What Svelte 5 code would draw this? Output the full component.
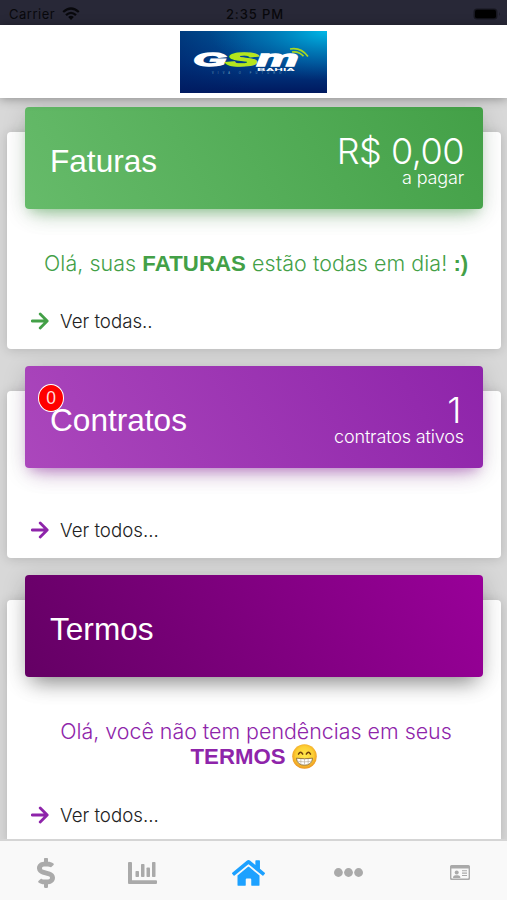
<script>
	const cards = [
		{ name: 'faturas', title: 'Faturas', value: 'R$ 0,00', label: 'a pagar', link: 'Ver todas..' },
		{ name: 'contratos', title: 'Contratos', value: '1', label: 'contratos ativos', badge: '0', link: 'Ver todos...' },
		{ name: 'termos', title: 'Termos', link: 'Ver todos...' }
	]
</script>

<div class="app">
	<div class="status">
		<div class="carrier">
			<span>Carrier</span>
			<svg class="wifi" viewBox="0 0 18 13">
				<g fill="none" stroke="#08080c" stroke-width="2.3">
					<path d="M1.2 5Q9-2 16.8 5" />
					<path d="M4 8.1Q9 3.6 14 8.1" />
				</g>
				<path d="M6.2 9.9Q9 7.6 11.8 9.9L9 12.9z" fill="#08080c" />
			</svg>
		</div>
		<span class="time">2:35 PM</span>
		<svg class="battery" viewBox="0 0 28 12">
			<rect x="0.5" y="0.5" width="24" height="11" rx="3.5" fill="#171720" />
			<rect x="2" y="1.8" width="21" height="8.4" rx="2" fill="#000" />
			<path d="M26 4q1.6 2 0 4z" fill="#171720" />
		</svg>
	</div>

	<header>
		<svg class="logo" viewBox="0 0 147 62">
			<defs>
				<linearGradient id="sky" x1="0" y1="0" x2="0" y2="1">
					<stop offset="0" stop-color="#005b9c" />
					<stop offset="0.5" stop-color="#00408a" />
					<stop offset="1" stop-color="#00195f" />
				</linearGradient>
				<radialGradient id="glow" cx="1" cy="0" r="0.8">
					<stop offset="0" stop-color="#00b9e8" />
					<stop offset="1" stop-color="#0070b0" stop-opacity="0" />
				</radialGradient>
				<linearGradient id="dark" x1="0" y1="0" x2="1" y2="0">
					<stop offset="0" stop-color="#001c62" stop-opacity="0.5" />
					<stop offset="0.5" stop-color="#001c62" stop-opacity="0" />
				</linearGradient>
			</defs>
			<rect width="147" height="62" fill="url(#sky)" />
			<rect width="147" height="62" fill="url(#dark)" />
			<rect width="147" height="62" fill="url(#glow)" />
			<g class="gsm">
				<text x="13.5" y="34.5" textLength="33" lengthAdjust="spacingAndGlyphs" fill="#fff" stroke="#fff">G</text>
				<text x="46" y="34.5" textLength="32" lengthAdjust="spacingAndGlyphs" fill="#b5e61d" stroke="#b5e61d">S</text>
				<text class="m" x="76.5" y="34.5" textLength="42" lengthAdjust="spacingAndGlyphs" fill="#fff" stroke="#fff">m</text>
			</g>
			<text class="bahia" x="77" y="39.5" textLength="38" lengthAdjust="spacingAndGlyphs">BAHIA</text>
			<text class="slogan" x="32" y="43" textLength="74">VIVA O FUTURO!</text>
			<g fill="none" stroke="#a9d820" stroke-width="1.7">
				<path d="M110 18Q121 16 128 25.5" />
				<path d="M112 21Q119 20 123.5 25.3" />
			</g>
		</svg>
	</header>

	<main>
		{#each cards as card}
			<section class="card {card.name}">
				<div class="banner">
					{#if card.badge}
						<span class="badge">{card.badge}</span>
					{/if}
					<h2>{card.title}</h2>
					{#if card.value}
						<div class="total">
							<span class="value">{card.value}</span>
							<span class="label">{card.label}</span>
						</div>
					{/if}
				</div>
				{#if card.name == 'faturas'}
					<p>Olá, suas <b>FATURAS</b> estão todas em dia! <b>:)</b></p>
				{:else if card.name == 'termos'}
					<p>
						<span class="first">Olá, você não tem pendências em seus</span>
						<span class="second">
							<b>TERMOS</b>
							<svg class="grin" viewBox="0 0 24 24">
								<defs>
									<radialGradient id="face" cx="0.5" cy="0.45" r="0.55">
										<stop offset="0" stop-color="#ffe94e" />
										<stop offset="0.65" stop-color="#fdcf33" />
										<stop offset="1" stop-color="#eb9422" />
									</radialGradient>
								</defs>
								<circle cx="12" cy="12" r="11.8" fill="url(#face)" />
								<path d="M6.2 9.8Q8.2 6 10.3 9.8M13.7 9.8Q15.8 6 17.8 9.8" fill="none" stroke="#70410c" stroke-width="1.4" stroke-linecap="round" />
								<path d="M4.2 13.6Q12 14.8 19.8 13.6Q19 20.4 12 20.4T4.2 13.6z" fill="#fff" stroke="#93703a" stroke-width="0.9" />
								<path d="M5 16.6Q12 17.7 19 16.6M8.5 14.2V19.5M12 14.4V20M15.5 14.2V19.5" fill="none" stroke="#b5aa98" stroke-width="0.6" />
							</svg>
						</span>
					</p>
				{/if}
				<a href="#{card.name}">
					<svg class="arrow" viewBox="0 0 18 18">
						<path d="M1.3 9H16M9.2 1.9L16.2 9L9.2 16.1" />
					</svg>
					<span>{card.link}</span>
				</a>
			</section>
		{/each}
	</main>

	<nav>
		<svg width="18" height="30" viewBox="0 0 288 512" preserveAspectRatio="none">
			<path d="M209.2 233.4l-108-31.6C88.7 198.2 80 186.5 80 173.5c0-16.3 13.2-29.5 29.5-29.5h66.3c12.2 0 24.2 3.7 34.2 10.5 6.1 4.1 14.3 3.1 19.5-2l34.8-34c7.1-6.9 6.1-18.4-1.8-24.5C238 74.8 207.4 64.1 176 64V16c0-8.8-7.2-16-16-16h-32c-8.8 0-16 7.2-16 16v48h-2.5C45.8 64-5.4 118.7.5 183.6c4.2 46.1 39.4 83.6 83.8 96.6l102.5 30c12.5 3.7 21.2 15.3 21.2 28.3 0 16.3-13.2 29.5-29.5 29.5h-66.3C100 368 88 364.3 78 357.5c-6.1-4.1-14.3-3.1-19.5 2l-34.8 34c-7.1 6.9-6.1 18.4 1.8 24.5 24.5 19.2 55.1 29.9 86.5 30v48c0 8.8 7.2 16 16 16h32c8.8 0 16-7.2 16-16v-48.2c46.6-.9 90.3-28.6 105.7-72.7 21.5-61.6-14.6-124.8-72.5-141.7z" />
		</svg>
		<svg width="29" height="22" viewBox="0 0 29 22">
			<path d="M1 0h2q1 0 1 1v17.3h24q1 0 1 1V21q0 1-1 1H1q-1 0-1-1V1q0-1 1-1z" />
			<rect x="7.5" y="9" width="3.5" height="6" rx="0.8" />
			<rect x="13" y="2" width="3.5" height="13" rx="0.8" />
			<rect x="18.5" y="5.5" width="3.5" height="9.5" rx="0.8" />
			<rect x="24" y="0" width="3.5" height="15" rx="0.8" />
		</svg>
		<svg class="active" width="33" height="30" viewBox="0 0 576 512">
			<path d="M280.37 148.26L96 300.11V464a16 16 0 0 0 16 16l112.06-.29a16 16 0 0 0 15.92-16V368a16 16 0 0 1 16-16h64a16 16 0 0 1 16 16v95.64a16 16 0 0 0 16 16.05L464 480a16 16 0 0 0 16-16V300L295.67 148.26a12.19 12.19 0 0 0-15.3 0zM571.6 251.47L488 182.56V44.05a12 12 0 0 0-12-12h-56a12 12 0 0 0-12 12v72.61L318.47 43a48 48 0 0 0-61 0L4.34 251.47a12 12 0 0 0-1.6 16.9l25.5 31A12 12 0 0 0 45.15 301l235.22-193.74a12.19 12.19 0 0 1 15.3 0L530.9 301a12 12 0 0 0 16.9-1.6l25.5-31a12 12 0 0 0-1.7-16.93z" />
		</svg>
		<svg width="29" height="9" viewBox="0 0 29 9">
			<circle cx="4.4" cy="4.5" r="4.4" />
			<circle cx="14.5" cy="4.5" r="4.4" />
			<circle cx="24.6" cy="4.5" r="4.4" />
		</svg>
		<svg class="id" width="20" height="15" viewBox="0 0 20 15">
			<path fill-rule="evenodd" d="M1.5 0h17Q20 0 20 1.5v12q0 1.5-1.5 1.5h-17Q0 15 0 13.5v-12Q0 0 1.5 0zM1.4 3.5v9.3q0 .7.7.7h15.8q.7 0 .7-.7V3.5z" />
			<circle cx="6.7" cy="7.4" r="2" />
			<path d="M3 13q0-2.8 2.6-2.8h2.2q2.6 0 2.6 2.8zM12 5.2h5v1.1h-5zM12 7.6h5v1.1h-5zM12 10h5v1.1h-5z" />
		</svg>
	</nav>
</div>

<style>
	:global(body) {
		margin: 0;
		background: #d8d8d8;
	}
	.app {
		display: flex;
		flex-direction: column;
		width: 507px;
		height: 900px;
		overflow: hidden;
		background: #d8d8d8;
		font-family: 'Liberation Sans', Arial, sans-serif;
	}
	.status {
		display: grid;
		grid-template-columns: 1fr auto 1fr;
		align-items: center;
		flex: none;
		height: 25px;
		padding: 2px 6px 0 9px;
		box-sizing: border-box;
		background: #282837;
		color: #08080c;
		font-family: Inter, sans-serif;
		font-size: 13px;
	}
	.carrier {
		display: flex;
		align-items: center;
		gap: 7px;
		letter-spacing: 0.5px;
	}
	.wifi {
		width: 18px;
		height: 13px;
	}
	.time {
		font-weight: 500;
		letter-spacing: 0.9px;
	}
	.battery {
		width: 28px;
		height: 12px;
		justify-self: end;
	}
	header {
		position: relative;
		z-index: 2;
		display: flex;
		flex: none;
		justify-content: center;
		height: 73px;
		padding-top: 6px;
		box-sizing: border-box;
		background: #fff;
		box-shadow: 0 1px 10px rgba(0, 0, 0, 0.35);
	}
	.logo {
		width: 147px;
		height: 62px;
	}
	.gsm {
		font-size: 17.5px;
		font-weight: bold;
		font-style: italic;
		stroke-width: 1.3;
	}
	.m {
		font-size: 22.5px;
	}
	.bahia {
		font-size: 4.2px;
		font-weight: bold;
		fill: #fff;
	}
	.slogan {
		font-size: 2.6px;
		fill: #6ea0bd;
	}
	main {
		flex: 1;
		padding: 34px 6px 0 7px;
		overflow: hidden;
	}
	.card {
		display: flex;
		flex-direction: column;
		height: 217px;
		margin-bottom: 42px;
		border-radius: 4px;
		background: #fff;
		box-shadow: 0 1px 12px rgba(0, 0, 0, 0.16);
	}
	.contratos {
		height: 167px;
	}
	.termos {
		height: 243px;
	}
	.banner {
		position: relative;
		display: flex;
		flex: none;
		align-items: center;
		justify-content: space-between;
		height: 102px;
		margin: -25px 18px 0;
		padding: 6px 19px 0 25px;
		box-sizing: border-box;
		border-radius: 4px;
		color: #fff;
	}
	.faturas .banner {
		background: linear-gradient(60deg, #66bb6a, #43a047);
		box-shadow: 0 12px 20px -10px rgba(76, 175, 80, 0.4), 0 4px 25px rgba(0, 0, 0, 0.14), 0 7px 10px -5px rgba(76, 175, 80, 0.3);
	}
	.contratos .banner {
		background: linear-gradient(60deg, #ab47bc, #8e24aa);
		box-shadow: 0 12px 20px -10px rgba(156, 39, 176, 0.4), 0 4px 25px rgba(0, 0, 0, 0.14), 0 7px 10px -5px rgba(156, 39, 176, 0.3);
	}
	.termos .banner {
		background: linear-gradient(60deg, #640064, #990099);
		box-shadow: 0 12px 20px -8px rgba(0, 0, 0, 0.4), 0 4px 25px rgba(0, 0, 0, 0.16);
	}
	h2 {
		margin: 0;
		font-size: 31.6px;
		font-weight: normal;
	}
	.total {
		display: flex;
		flex-direction: column;
		align-items: flex-end;
		padding-top: 1px;
		font-family: Inter, sans-serif;
		font-weight: 300;
	}
	.value {
		font-size: 36px;
		line-height: 33px;
		letter-spacing: -0.5px;
	}
	.label {
		font-size: 18px;
		line-height: 20px;
		letter-spacing: -0.15px;
	}
	.contratos .value {
		padding-right: 3px;
	}
	.badge {
		position: absolute;
		left: 13px;
		top: 18px;
		width: 26px;
		height: 28px;
		border: 1px solid #fff;
		border-radius: 50%;
		box-sizing: border-box;
		background: #f00;
		color: #ffdcdc;
		font-size: 17.5px;
		line-height: 27px;
		text-align: center;
	}
	p {
		display: flex;
		flex-direction: column;
		align-items: center;
		margin: 41px 0 0;
		font-family: Inter, sans-serif;
		font-size: 21.4px;
		font-weight: 300;
		line-height: 26px;
		white-space: nowrap;
	}
	p b {
		font-family: 'Liberation Sans', Arial, sans-serif;
		font-size: 22.2px;
		font-weight: bold;
	}
	.faturas p {
		display: block;
		padding-left: 37px;
		color: #43a047;
		letter-spacing: 0.08px;
	}
	.termos p {
		color: #8e24aa;
	}
	.first {
		padding-left: 4px;
	}
	.second {
		display: flex;
		align-items: center;
		gap: 7px;
	}
	.second .grin {
		margin-bottom: 1px;
	}
	.grin {
		width: 25px;
		height: 25px;
	}
	a {
		display: flex;
		align-items: center;
		gap: 11px;
		height: 20px;
		margin: auto 0 18px 24px;
		color: #222;
		font-family: Inter, sans-serif;
		font-size: 18.7px;
		font-weight: 300;
		text-decoration: none;
	}
	.arrow {
		width: 18px;
		height: 18px;
		fill: none;
		stroke: #43a047;
		stroke-width: 2.8;
		stroke-linecap: round;
		stroke-linejoin: round;
	}
	.contratos .arrow, .termos .arrow {
		stroke: #8e24aa;
	}
	nav {
		display: grid;
		grid-template-columns: 91px 104px 102px 116px 1fr;
		align-items: center;
		flex: none;
		height: 61px;
		padding: 4px 0 0 37px;
		box-sizing: border-box;
		border-top: 2px solid #d5d5d5;
		background: #f9f9f9;
		fill: #aaa;
	}
	nav .active {
		fill: #1da1ff;
	}
</style>
